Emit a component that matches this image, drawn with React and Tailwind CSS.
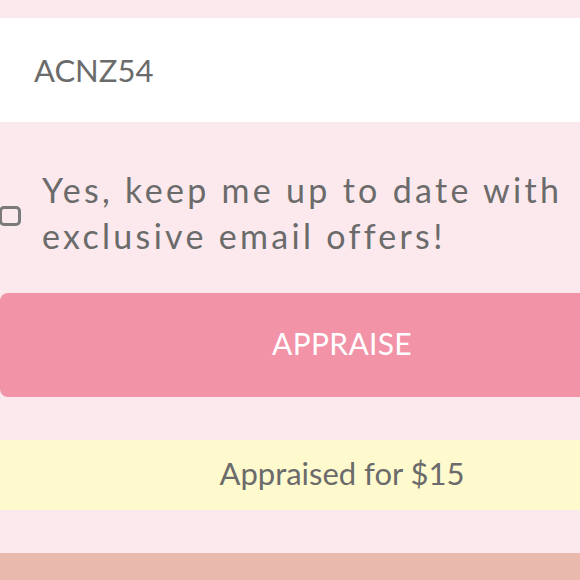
import React, { useState } from "react";

const App = () => {
  const [optIn, setOptIn] = useState(false);
  return (
    <div
      className="w-full h-[580px] overflow-hidden bg-[#fbe9ed]"
      style={{ fontFamily: "Lato, 'Open Sans', sans-serif" }}
    >
      <div className="w-[684px] pt-[18px] flex flex-col">
        <div className="h-[104px] bg-white flex items-center px-[34px]">
          <span className="text-[31px] text-[#6b6b6b] pt-[1px]">ACNZ54</span>
        </div>

        <label className="flex items-center gap-[21px] pt-[45px] pb-[34px] cursor-pointer">
          <span
            onClick={() => setOptIn(!optIn)}
            className="ml-[-1px] mt-[6px] w-[22px] h-[20px] rounded-[5px] border-[3px] border-[#7a7a7a] shrink-0"
          ></span>
          <span className="text-[34px] leading-[46px] tracking-[3.3px] text-[#6b6b6b] w-[580px]">
            Yes, keep me up to date with exclusive email offers!
          </span>
        </label>

        <button className="h-[104px] w-full rounded-lg bg-[#f293a8] text-white text-[30px] tracking-[0.3px] flex items-center justify-center pb-[3px]">
          APPRAISE
        </button>

        <div className="h-[43px]"></div>

        <div className="h-[70px] bg-[#fffacd] flex items-center justify-center">
          <span className="text-[31px] text-[#6b6b6b] pb-[4px]">Appraised for $15</span>
        </div>

        <div className="h-[43px]"></div>

        <div className="h-[60px] bg-[#e9b9ae]"></div>
      </div>
    </div>
  );
};

export default App;
